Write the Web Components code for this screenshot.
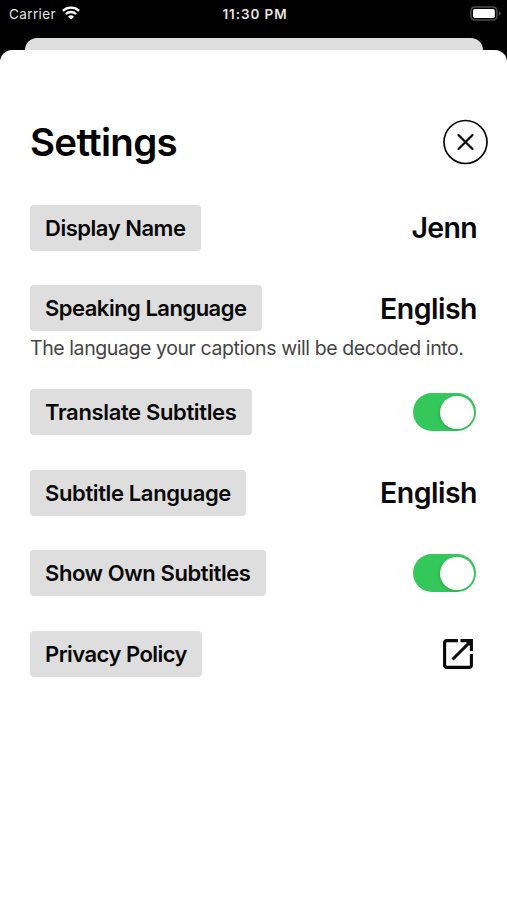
<!DOCTYPE html>
<html lang="en">
<head>
<meta charset="utf-8">
<title>Settings</title>
<style>
html,body{margin:0;height:100%;background:#000;overflow:hidden}
body{font-family:Inter,"Liberation Sans",sans-serif;color:#080808}
</style>
</head>
<body>
<phone-screen>
  <status-bar slot="status"></status-bar>
  <settings-sheet>
    <sheet-header slot="header"><fit-text width="147">Settings</fit-text></sheet-header>
    <setting-row label="Display Name" label-width="140.5"><value-text><fit-text width="65.5">Jenn</fit-text></value-text></setting-row>
    <setting-row label="Speaking Language" label-width="201.5" note="The language your captions will be decoded into." note-width="433.5"><value-text><fit-text width="97">English</fit-text></value-text></setting-row>
    <setting-row label="Translate Subtitles" label-width="191.5"><toggle-switch></toggle-switch></setting-row>
    <setting-row label="Subtitle Language" label-width="186"><value-text><fit-text width="97">English</fit-text></value-text></setting-row>
    <setting-row label="Show Own Subtitles" label-width="205.5"><toggle-switch></toggle-switch></setting-row>
    <setting-row label="Privacy Policy" label-width="142"><open-icon></open-icon></setting-row>
  </settings-sheet>
</phone-screen>
<script>
const define = (name, html, setup) => customElements.define(name, class extends HTMLElement {
  connectedCallback() {
    if (this.shadowRoot) return;
    this.attachShadow({ mode: 'open' }).innerHTML = html;
    if (setup) setup(this, this.shadowRoot);
  }
});

define('phone-screen', `<style>
:host{display:flex;flex-direction:column;height:900px;width:507px;background:#000}
.back{height:12px;margin:10.5px 24px 0 25px;background:#dedede;border-radius:12px 12px 0 0;flex:none}
</style><slot name="status"></slot><div class="back"></div><slot></slot>`);

define('status-bar', `<style>
:host{display:grid;grid-template-columns:1fr auto 1fr;align-items:center;height:27px;flex:none;color:#e4e4e4;font-size:13.5px;padding:0 6px 0 9px;box-sizing:border-box}
.left{display:flex;align-items:center;gap:6px}
.left svg{margin-bottom:1px}
.time{font-weight:600}
.right{display:flex;justify-content:flex-end}
svg{display:block}
</style>
<div class="left"><fit-text width="47">Carrier</fit-text>
<svg width="18" height="14" viewBox="0 0 18 14" fill="none" stroke="#fff" stroke-width="2.3"><path d="M.9 4.8C5.4.6 12.6.6 17.1 4.8M3.9 8C6.7 5.3 11.3 5.3 14.1 8"/><path d="M9 13.6 6 10.7Q9 8 12 10.7Z" fill="#fff" stroke="none"/></svg></div>
<div class="time"><fit-text width="65">11:30 PM</fit-text></div>
<div class="right"><svg width="31" height="15" viewBox="0 0 31 15"><rect x=".9" y="1" width="26" height="13" rx="3.8" fill="#000" stroke="#4c4c4c" stroke-width="1.5"/><rect x="3" y="3" width="21.8" height="9" rx="1.7" fill="#fff"/><path d="M28.8 5.2q2 .8 2 2.3t-2 2.3z" fill="#4c4c4c"/></svg></div>`);

define('settings-sheet', `<style>
:host{display:flex;flex-direction:column;flex:1;background:#fff;border-radius:12px 12px 0 0;padding:70.5px 30px 0;box-sizing:border-box}
.rows{display:flex;flex-direction:column;gap:34.5px;margin-top:40.5px}
</style><slot name="header"></slot><div class="rows"><slot></slot></div>`);

define('sheet-header', `<style>
:host{display:flex;justify-content:space-between;align-items:center;height:44px;margin-right:-11px;font-size:38.5px;font-weight:600;line-height:44px;color:#000}
svg{display:block}
</style><slot></slot><svg width="46" height="46" viewBox="0 0 46 46" fill="none" stroke="#080808"><circle cx="23.5" cy="23" r="21.5" stroke-width="1.7"/><path d="m16.5 16 14 14m0-14-14 14" stroke-width="2.2" stroke-linecap="round"/></svg>`);

define('setting-row', `<style>
:host{display:block}
.main{display:flex;justify-content:space-between;align-items:center;height:46px}
.chip{height:46px;line-height:46px;padding:0 15px;border-radius:4px;background:#dedede;font-size:22px;font-weight:600}
.note{height:23.8px;line-height:35px;font-size:19.5px;color:#454545}
</style><div class="main"><div class="chip"></div><slot></slot></div>`, (host, root) => {
  const add = (parent, text, width) => {
    const t = document.createElement('fit-text');
    t.setAttribute('width', width);
    t.textContent = text;
    parent.append(t);
  };
  add(root.querySelector('.chip'), host.getAttribute('label'), host.getAttribute('label-width'));
  if (host.hasAttribute('note')) {
    const note = document.createElement('div');
    note.className = 'note';
    root.append(note);
    add(note, host.getAttribute('note'), host.getAttribute('note-width'));
  }
});

define('value-text', `<style>
:host{display:block;font-size:28.5px;font-weight:600;line-height:47px;white-space:nowrap;color:#080808}
</style><slot></slot>`);

define('toggle-switch', `<style>
:host{display:flex;justify-content:flex-end;align-items:center;width:62.5px;height:38px;border-radius:19px;background:#34c759;padding:0 2px;margin-right:1.5px;box-sizing:border-box}
i{width:33.5px;height:33.5px;border-radius:50%;background:#fff;box-shadow:-1px 1px 3px #0002}
</style><i></i>`);

define('open-icon', `<style>
:host{display:block;margin-right:3px}
svg{display:block}
</style><svg width="32" height="32" viewBox="0 0 32 32" fill="none" stroke="#080808" stroke-width="3.1"><path d="M16 2.6H5Q2.6 2.6 2.6 5V27Q2.6 29.4 5 29.4H27Q29.4 29.4 29.4 27V16"/><path d="M18.5 2.6H29.4V13M29 3 10.5 21.5"/><path d="M22 2H30V10Z" fill="#080808" stroke="none"/></svg>`);

// Spreads letters so that the text takes exactly the requested width.
// Registered last: the surrounding elements' font styles must apply first.
define('fit-text', `<style>
:host{display:inline-block;white-space:nowrap}
span{display:inline-block}
</style><span><slot></slot></span>`, (host, root) => {
  const span = root.querySelector('span');
  const target = parseFloat(host.getAttribute('width'));
  const natural = span.getBoundingClientRect().width;
  span.style.letterSpacing = (target - natural) / host.textContent.length + 'px';
});
</script>
</body>
</html>
